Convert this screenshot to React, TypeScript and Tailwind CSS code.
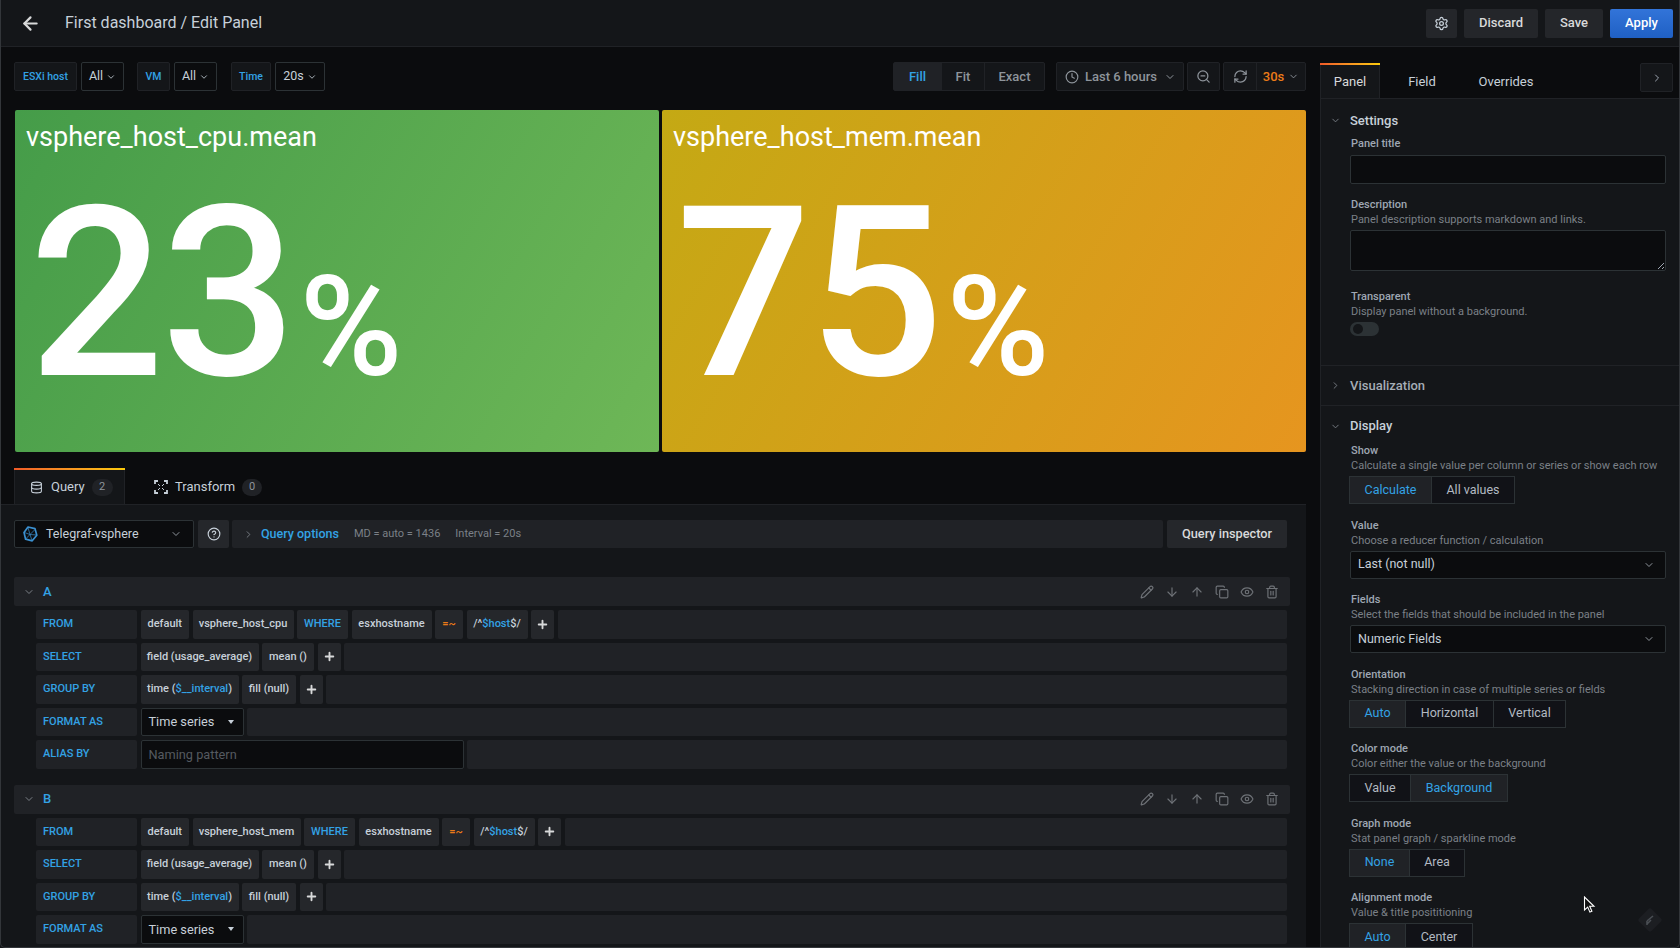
import React from "react";
import { ArrowLeft, Settings, ChevronDown, ChevronRight, Clock, ZoomOut, RefreshCw, Database, Pencil, ArrowDown, ArrowUp, Copy, Eye, Trash2, CircleHelp, Plus } from "lucide-react";

const blue = "text-[#33a2e5]";

function Btn({ w, children, cls = "" }: { w: string; children: React.ReactNode; cls?: string }) {
  return <div className={`${w} h-[29px] flex items-center justify-center rounded-[2px] text-[13px] font-medium ${cls}`}>{children}</div>;
}

function VarLabel({ w, children }: { w: string; children: React.ReactNode }) {
  return <div className={`${w} h-[29px] flex items-center justify-center rounded-[2px] bg-[#141619] border border-[#202226] text-[#33a2e5] text-[10.5px] font-medium`}>{children}</div>;
}

function VarValue({ w, children }: { w: string; children: React.ReactNode }) {
  return (
    <div className={`${w} h-[29px] flex items-center justify-center gap-[3px] rounded-[2px] bg-[#0b0c0e] border border-[#2c3235] text-[#c7d0d9] text-[12.5px]`}>
      {children}
      <ChevronDown size={10} />
    </div>
  );
}

function Stat({ title, value, cls }: { title: string; value: string; cls: string }) {
  return (
    <div className={`w-[644px] h-[342px] rounded-[2px] overflow-hidden text-white ${cls}`}>
      <div className="h-[40px] mt-[7px] pl-[11px] flex items-center text-[27px] leading-none">{title}</div>
      <div className="flex items-baseline pl-[14px] mt-[18px] font-medium leading-none">
        <span className="text-[238px] leading-none tracking-[-3px]">{value}</span>
        <span className="text-[140px] leading-none ml-[6px]">%</span>
      </div>
    </div>
  );
}

type Seg = { w: string; t: React.ReactNode; dark?: boolean };

function QRow({ label, segs, filler = true }: { label: string; segs: Seg[]; filler?: boolean }) {
  return (
    <div className="flex h-[28.5px] mb-[4px] gap-[3.5px] text-[11px] font-medium text-[#c7d0d9]">
      <div className={`w-[101px] bg-[#202226] rounded-[2px] flex items-center pl-[7px] ${blue}`}>{label}</div>
      {segs.map((s, i) => (
        <div key={i} className={`${s.w} rounded-[2px] flex items-center justify-center whitespace-nowrap ${s.dark ? "bg-[#0b0c0e] border border-[#2c3235]" : "bg-[#25272b]"}`}>{s.t}</div>
      ))}
      {filler && <div className="flex-1 bg-[#202226] rounded-[2px]" />}
    </div>
  );
}

const plus = <Plus size={13} strokeWidth={3.5} className="text-[#d8d9da]" />;
const timeSeg = (
  <span>
    time (<span className={blue}>$__interval</span>)
  </span>
);
const hostSeg = (
  <span>
    /^<span className={blue}>$host</span>$/
  </span>
);
const fmt = (
  <div className="w-full flex items-center justify-between pl-[7px] pr-[9px] text-[12.75px] font-normal">
    Time series
    <span className="w-0 h-0 border-l-[3.5px] border-r-[3.5px] border-t-[4px] border-l-transparent border-r-transparent border-t-[#c7d0d9]" />
  </div>
);

function QHeader({ name }: { name: string }) {
  return (
    <div className="h-[29px] mb-[4px] -mr-[3px] bg-[#202226] rounded-[2px] flex items-center pl-[9px] pr-[11px]">
      <ChevronDown size={12} className="text-[#7b8087]" />
      <span className={`ml-[8px] text-[13px] font-medium ${blue}`}>{name}</span>
      <div className="ml-auto flex items-center gap-[11px] text-[#6e7277]">
        <Pencil size={14} />
        <ArrowDown size={14} />
        <ArrowUp size={14} />
        <Copy size={14} />
        <Eye size={14} />
        <Trash2 size={14} />
      </div>
    </div>
  );
}

function Radio({ items, widths, active }: { items: string[]; widths: string[]; active: number }) {
  return (
    <div className="flex h-[28px] -ml-[1px] text-[12.5px]">
      {items.map((it, i) => (
        <div
          key={it}
          className={`${widths[i]} flex items-center justify-center border border-[#2c3235] ${i > 0 ? "-ml-[1px]" : ""} ${i === active ? "bg-[#202226] text-[#33a2e5]" : "bg-[#111217] text-[#b3bac2]"}`}
        >
          {it}
        </div>
      ))}
    </div>
  );
}

function Field({ label, sub, children }: { label: string; sub: string; children: React.ReactNode }) {
  return (
    <div className="mb-[13.5px]">
      <div className="h-[15px] pl-[1px] leading-[15px] text-[11px] font-medium text-[#9fa7b3]">{label}</div>
      <div className="h-[15px] pl-[1px] leading-[15px] text-[11px] text-[#7b8087] whitespace-nowrap">{sub}</div>
      <div className="mt-[3px]">{children}</div>
    </div>
  );
}

function SelectBox({ text }: { text: string }) {
  return (
    <div className="h-[28px] bg-[#0b0c0e] border border-[#2c3235] rounded-[2px] flex items-center justify-between pl-[7px] pr-[10px] text-[12.5px] text-[#c7d0d9]">
      {text}
      <ChevronDown size={12} className="text-[#8e949b]" />
    </div>
  );
}

function SectionHead({ title, open = true }: { title: string; open?: boolean }) {
  return (
    <div className="flex items-center h-full pl-[9px]">
      {open ? <ChevronDown size={11} className="text-[#7b8087]" /> : <ChevronRight size={11} className="text-[#7b8087]" />}
      <span className={`ml-[9px] text-[13px] font-medium ${open ? "text-[#c7d0d9]" : "text-[#a5acb5]"}`}>{title}</span>
    </div>
  );
}

export default function App() {
  return (
    <div className="relative w-[1680px] h-[948px] overflow-hidden bg-[#0b0c0e] text-[#c7d0d9] [font-family:Roboto,sans-serif]">
      <header className="h-[47px] bg-[#141619] border-b border-[#202226] flex items-center pl-[20px] pr-[7px]">
        <ArrowLeft size={21} strokeWidth={2.5} className="text-[#d8d9da]" />
        <div className="ml-[24px] text-[16px] text-[#c7d0d9]">First dashboard / Edit Panel</div>
        <div className="ml-auto flex items-center gap-[7px]">
          <Btn w="w-[31px]" cls="bg-[#24262a]"><Settings size={15} /></Btn>
          <Btn w="w-[74px]" cls="bg-[#24262a] text-[#d8d9da]">Discard</Btn>
          <Btn w="w-[58px]" cls="bg-[#24262a] text-[#d8d9da]">Save</Btn>
          <Btn w="w-[63px]" cls="bg-gradient-to-b from-[#3274d9] to-[#1f60c4] text-white">Apply</Btn>
        </div>
      </header>

      <div className="flex h-[901px]">
        <div className="w-[1306px] shrink-0 flex flex-col">
          <div className="shrink-0 flex items-center mt-[15px] pl-[14px] h-[29px]">
            <VarLabel w="w-[63px]">ESXi host</VarLabel>
            <div className="ml-[4px]"><VarValue w="w-[43px]">All</VarValue></div>
            <div className="ml-[13px]"><VarLabel w="w-[33px]">VM</VarLabel></div>
            <div className="ml-[4px]"><VarValue w="w-[43px]">All</VarValue></div>
            <div className="ml-[14px]"><VarLabel w="w-[40px]">Time</VarLabel></div>
            <div className="ml-[4px]"><VarValue w="w-[50px]">20s</VarValue></div>

            <div className="ml-auto flex items-center text-[13px] font-medium text-[#8e949b]">
              <div className="flex h-[29px] border border-[#202226] rounded-[2px] bg-[#141619]">
                <div className={`w-[47px] flex items-center justify-center bg-[#202226] ${blue}`}>Fill</div>
                <div className="w-[43px] flex items-center justify-center border-l border-[#202226]">Fit</div>
                <div className="w-[60px] flex items-center justify-center border-l border-[#202226]">Exact</div>
              </div>
              <div className="ml-[11px] w-[128px] h-[29px] border border-[#202226] rounded-[2px] bg-[#141619] flex items-center pl-[8px] pr-[7px]">
                <Clock size={14} />
                <span className="ml-[6px]">Last 6 hours</span>
                <ChevronDown size={12} className="ml-auto" />
              </div>
              <div className="ml-[3px] w-[33px] h-[29px] border border-[#202226] rounded-[2px] bg-[#141619] flex items-center justify-center">
                <ZoomOut size={15} />
              </div>
              <div className="ml-[3px] flex h-[29px] border border-[#202226] rounded-[2px] bg-[#141619]">
                <div className="w-[32px] flex items-center justify-center"><RefreshCw size={15} /></div>
                <div className="w-[49px] flex items-center justify-center gap-[4px] border-l border-[#202226] text-[#eb7b18]">
                  30s
                  <ChevronDown size={11} className="text-[#8e949b]" />
                </div>
              </div>
            </div>
          </div>

          <div className="shrink-0 flex gap-[3px] mt-[19px] ml-[15px]">
            <Stat title="vsphere_host_cpu.mean" value="23" cls="bg-[linear-gradient(120deg,#459c49,#6eb757)]" />
            <Stat title="vsphere_host_mem.mean" value="75" cls="bg-[linear-gradient(120deg,#c4a914,#e6951f)]" />
          </div>

          <div className="shrink-0 flex h-[36px] mt-[16px] pl-[14px] text-[13px]">
            <div className="relative w-[111px] bg-[#141619] border-x border-[#202226] flex items-center pl-[15px] pt-[2px]">
              <div className="absolute top-0 left-[-1px] right-[-1px] h-[2px] bg-gradient-to-r from-[#f05a28] to-[#fbca0a]" />
              <Database size={13} />
              <span className="ml-[8px]">Query</span>
              <span className="ml-[7px] w-[21px] h-[17px] rounded-full bg-[#202226] text-[#8e949b] text-[11px] flex items-center justify-center">2</span>
            </div>
            <div className="flex items-center pl-[29px] pt-[2px]">
              <svg width="14" height="14" viewBox="0 0 14 14" fill="none" stroke="currentColor" strokeWidth="1.8">
                <path d="M1 4V1h3M10 1h3v3M13 10v3h-3M4 13H1v-3" />
                <path d="M4 4l2 2M10 4L8 6M4 10l2-2M10 10L8 8" strokeWidth="1" />
              </svg>
              <span className="ml-[7px]">Transform</span>
              <span className="ml-[7px] w-[20px] h-[17px] rounded-full bg-[#202226] text-[#8e949b] text-[11px] flex items-center justify-center">0</span>
            </div>
          </div>

          <div className="flex-1 min-h-0 bg-[#141619] border-t border-[#202226] pl-[14px] pr-[19px] pt-[15px]">
            <div className="flex h-[28px] items-stretch">
              <div className="w-[180px] bg-[#0b0c0e] border border-[#2c3235] rounded-[2px] flex items-center pl-[8px] pr-[11px] text-[12.5px]">
                <svg width="15" height="16" viewBox="0 0 15 16" fill="none" stroke="#3b90d0" strokeLinejoin="round">
                  <path d="M5 1l7 1.6 1.8 6.6-4.6 5.6-6.6-1.6L1 6.4z" strokeWidth="1.7" />
                  <path d="M5 1.5L7 8.5l5-5M7 8.5L2.6 13M7 8.5l2 6M1.5 6.5L7 8.5l6.5.5" strokeWidth=".7" />
                </svg>
                <span className="ml-[8px]">Telegraf-vsphere</span>
                <ChevronDown size={12} className="ml-auto text-[#8e949b]" />
              </div>
              <div className="ml-[4px] w-[31px] bg-[#25272b] rounded-[2px] flex items-center justify-center">
                <CircleHelp size={14} />
              </div>
              <div className="ml-[3px] flex-1 bg-[#202226] rounded-[2px] flex items-center pl-[11px]">
                <ChevronRight size={11} className="text-[#7b8087]" />
                <span className={`ml-[7px] text-[12.5px] font-medium ${blue}`}>Query options</span>
                <span className="ml-[15px] text-[11px] text-[#7b8087]">MD = auto = 1436</span>
                <span className="ml-[15px] text-[11px] text-[#7b8087]">Interval = 20s</span>
              </div>
              <div className="ml-[4px] w-[120px] bg-[#25272b] rounded-[2px] flex items-center justify-center text-[12.75px] font-medium text-[#d8d9da]">Query inspector</div>
            </div>

            <div className="mt-[29px]">
              <QHeader name="A" />
              <div className="pl-[22px]">
                <QRow label="FROM" segs={[
                  { w: "w-[48.5px]", t: "default" },
                  { w: "w-[101px]", t: "vsphere_host_cpu" },
                  { w: "w-[51px]", t: <span className={blue}>WHERE</span> },
                  { w: "w-[80px]", t: "esxhostname" },
                  { w: "w-[28px]", t: <span className="text-[#eb7b18]">=~</span> },
                  { w: "w-[61px]", t: hostSeg },
                  { w: "w-[23px]", t: plus },
                ]} />
                <QRow label="SELECT" segs={[
                  { w: "w-[118px]", t: "field (usage_average)" },
                  { w: "w-[52px]", t: "mean ()" },
                  { w: "w-[23px]", t: plus },
                ]} />
                <QRow label="GROUP BY" segs={[
                  { w: "w-[98px]", t: timeSeg },
                  { w: "w-[54px]", t: "fill (null)" },
                  { w: "w-[23px]", t: plus },
                ]} />
                <QRow label="FORMAT AS" segs={[{ w: "w-[103px]", t: fmt, dark: true }]} />
                <QRow label="ALIAS BY" segs={[
                  { w: "w-[323px]", t: <div className="w-full pl-[7px] text-[12.75px] font-normal text-[#555a60]">Naming pattern</div>, dark: true },
                ]} />
              </div>
            </div>

            <div className="mt-[16px]">
              <QHeader name="B" />
              <div className="pl-[22px]">
                <QRow label="FROM" segs={[
                  { w: "w-[48.5px]", t: "default" },
                  { w: "w-[108px]", t: "vsphere_host_mem" },
                  { w: "w-[51px]", t: <span className={blue}>WHERE</span> },
                  { w: "w-[80px]", t: "esxhostname" },
                  { w: "w-[28px]", t: <span className="text-[#eb7b18]">=~</span> },
                  { w: "w-[61px]", t: hostSeg },
                  { w: "w-[23px]", t: plus },
                ]} />
                <QRow label="SELECT" segs={[
                  { w: "w-[118px]", t: "field (usage_average)" },
                  { w: "w-[52px]", t: "mean ()" },
                  { w: "w-[23px]", t: plus },
                ]} />
                <QRow label="GROUP BY" segs={[
                  { w: "w-[98px]", t: timeSeg },
                  { w: "w-[54px]", t: "fill (null)" },
                  { w: "w-[23px]", t: plus },
                ]} />
                <QRow label="FORMAT AS" segs={[{ w: "w-[103px]", t: fmt, dark: true }]} />
              </div>
            </div>
          </div>
        </div>

        <div className="w-[14px] shrink-0" />

        <aside className="w-[360px] shrink-0 flex flex-col">
          <div className="shrink-0 flex h-[36px] mt-[16px] text-[13px] border-b border-[#202226]">
            <div className="relative w-[60px] bg-[#141619] border-x border-[#202226] flex items-center justify-center pt-[3px] text-[#d8d9da]">
              <div className="absolute top-0 left-[-1px] right-[-1px] h-[2px] bg-gradient-to-r from-[#f05a28] to-[#fbca0a]" />
              Panel
            </div>
            <div className="w-[84px] flex items-center justify-center pt-[3px]">Field</div>
            <div className="w-[84px] flex items-center justify-center pt-[3px]">Overrides</div>
            <div className="ml-[92px] w-[33px] h-[29px] bg-[#141619] border border-[#202226] rounded-[2px] flex items-center justify-center text-[#9fa7b3]">
              <ChevronRight size={12} />
            </div>
          </div>
          <div className="flex-1 min-h-0 bg-[#141619] border-l border-[#202226]">
            <div className="h-[267px] border-b border-[#202226]">
              <div className="h-[37px] pt-[6px]"><SectionHead title="Settings" /></div>
              <div className="pl-[29px] pr-[14px]">
                <div className="h-[15px] pl-[1px] leading-[15px] text-[11px] font-medium text-[#9fa7b3]">Panel title</div>
                <div className="mt-[4px] h-[29px] bg-[#0b0c0e] border border-[#2c3235] rounded-[2px]" />
                <div className="mt-[13px] h-[15px] pl-[1px] leading-[15px] text-[11px] font-medium text-[#9fa7b3]">Description</div>
                <div className="h-[15px] pl-[1px] leading-[15px] text-[11px] text-[#7b8087]">Panel description supports markdown and links.</div>
                <div className="relative mt-[3px] h-[41px] bg-[#0b0c0e] border border-[#2c3235] rounded-[2px]">
                  <svg className="absolute right-0 bottom-0" width="8" height="8" viewBox="0 0 8 8" stroke="#9fa7b3" strokeWidth="1"><path d="M1 7L7 1M5 7L7 5" /></svg>
                </div>
                <div className="mt-[18px] h-[15px] pl-[1px] leading-[15px] text-[11px] font-medium text-[#9fa7b3]">Transparent</div>
                <div className="h-[15px] pl-[1px] leading-[15px] text-[11px] text-[#7b8087]">Display panel without a background.</div>
                <div className="mt-[3px] w-[29px] h-[14px] rounded-full bg-[#2c3235] flex items-center pl-[3px]">
                  <div className="w-[10px] h-[10px] rounded-full bg-[#141619]" />
                </div>
              </div>
            </div>
            <div className="h-[40px] border-b border-[#202226]"><SectionHead title="Visualization" open={false} /></div>
            <div className="h-[37px] pt-[3px]"><SectionHead title="Display" /></div>
            <div className="pl-[29px] pr-[14px]">
              <Field label="Show" sub="Calculate a single value per column or series or show each row">
                <Radio items={["Calculate", "All values"]} widths={["w-[83px]", "w-[84px]"]} active={0} />
              </Field>
              <Field label="Value" sub="Choose a reducer function / calculation"><SelectBox text="Last (not null)" /></Field>
              <Field label="Fields" sub="Select the fields that should be included in the panel"><SelectBox text="Numeric Fields" /></Field>
              <Field label="Orientation" sub="Stacking direction in case of multiple series or fields">
                <Radio items={["Auto", "Horizontal", "Vertical"]} widths={["w-[57px]", "w-[89px]", "w-[73px]"]} active={0} />
              </Field>
              <Field label="Color mode" sub="Color either the value or the background">
                <Radio items={["Value", "Background"]} widths={["w-[62px]", "w-[98px]"]} active={1} />
              </Field>
              <Field label="Graph mode" sub="Stat panel graph / sparkline mode">
                <Radio items={["None", "Area"]} widths={["w-[61px]", "w-[56px]"]} active={0} />
              </Field>
              <Field label="Alignment mode" sub="Value & title posititioning">
                <Radio items={["Auto", "Center"]} widths={["w-[57px]", "w-[68px]"]} active={0} />
              </Field>
            </div>
          </div>
        </aside>
      </div>

      <div className="absolute left-[1641px] top-[911px] w-[18px] h-[18px] rotate-45 rounded-[3px] bg-[#1c1e22]" />
      <svg className="absolute left-[1644px] top-[914px]" width="12" height="12" viewBox="0 0 12 12" stroke="#4a4e54" strokeWidth="1.6"><path d="M3 7l6-5M3 10l4-4M3 7v4" fill="none" /></svg>
      <svg className="absolute left-[1583px] top-[896px]" width="14" height="18" viewBox="0 0 14 18">
        <path d="M1.5 1v13l3.2-2.9 2.2 5 2-.9-2.2-4.9h4.3z" fill="#111" stroke="#fff" strokeWidth="1.1" />
      </svg>
      <div className="absolute inset-0 pointer-events-none border-x border-b border-[#33363a] rounded-b-[5px]" />
    </div>
  );
}
